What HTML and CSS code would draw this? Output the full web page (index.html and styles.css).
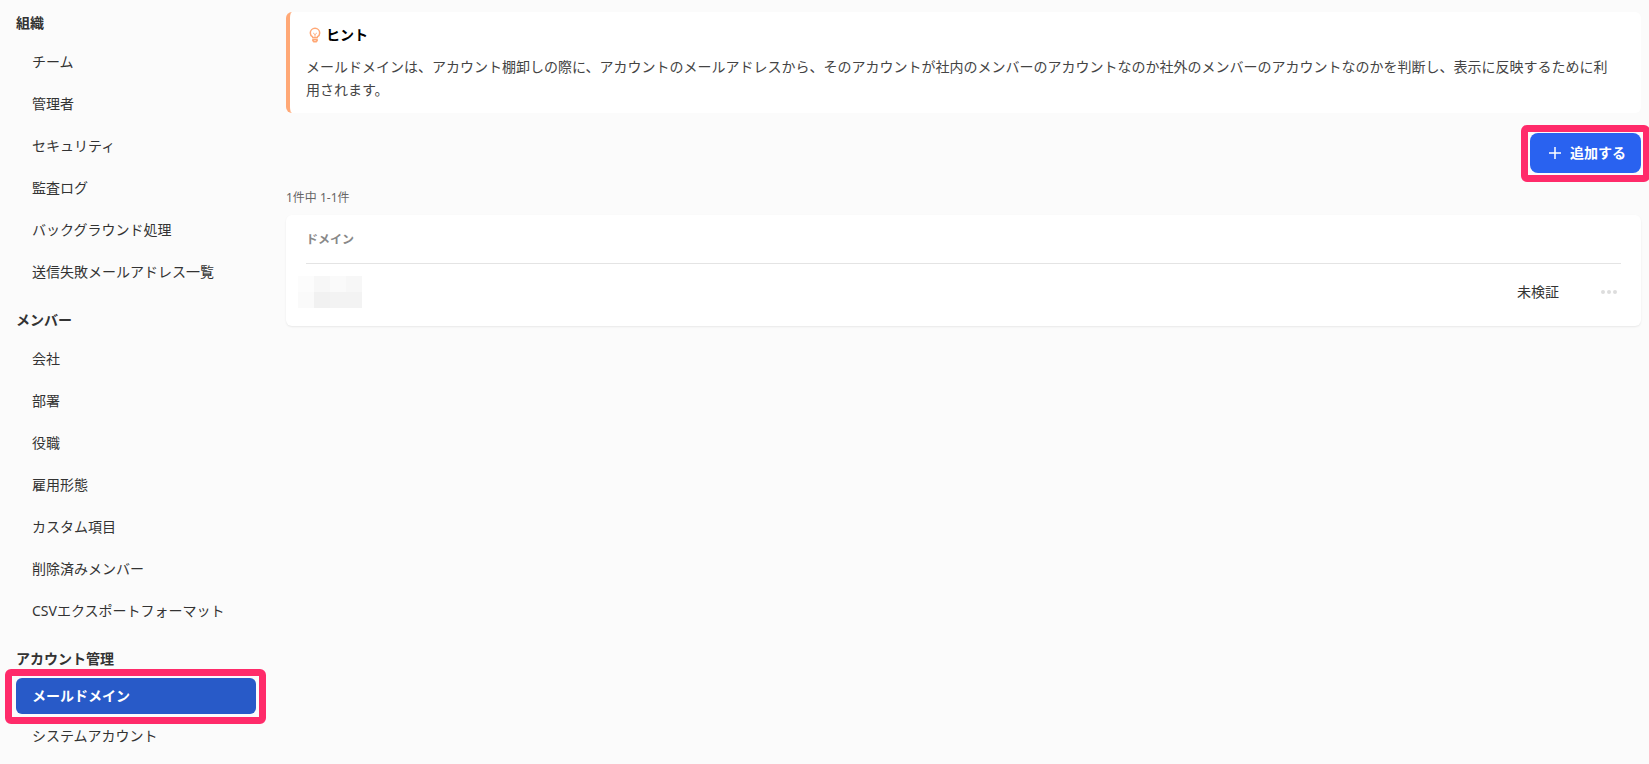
FILE: index.html
```html
<!DOCTYPE html>
<html lang="ja">
<head>
<meta charset="utf-8">
<meta name="viewport" content="width=device-width, initial-scale=1">
<title>メールドメイン</title>
<link rel="stylesheet" href="styles.css">
</head>
<body>
<div class="layout">
  <nav class="sidebar" aria-label="設定">
    <section class="group">
      <h2 class="group-title">組織</h2>
      <ul class="menu">
        <li><a class="menu-link" href="#team">チーム</a></li>
        <li><a class="menu-link" href="#admins">管理者</a></li>
        <li><a class="menu-link" href="#security">セキュリティ</a></li>
        <li><a class="menu-link" href="#audit">監査ログ</a></li>
        <li><a class="menu-link" href="#jobs">バックグラウンド処理</a></li>
        <li><a class="menu-link" href="#bounces">送信失敗メールアドレス一覧</a></li>
      </ul>
    </section>
    <section class="group">
      <h2 class="group-title">メンバー</h2>
      <ul class="menu">
        <li><a class="menu-link" href="#companies">会社</a></li>
        <li><a class="menu-link" href="#departments">部署</a></li>
        <li><a class="menu-link" href="#positions">役職</a></li>
        <li><a class="menu-link" href="#employment">雇用形態</a></li>
        <li><a class="menu-link" href="#fields">カスタム項目</a></li>
        <li><a class="menu-link" href="#deleted">削除済みメンバー</a></li>
        <li><a class="menu-link" href="#csv">CSVエクスポートフォーマット</a></li>
      </ul>
    </section>
    <section class="group group-compact">
      <h2 class="group-title">アカウント管理</h2>
      <ul class="menu">
        <li><a class="menu-link is-active" href="#domains" aria-current="page">メールドメイン</a></li>
        <li><a class="menu-link" href="#system">システムアカウント</a></li>
      </ul>
    </section>
  </nav>

  <main class="content">
    <aside class="hint">
      <h3 class="hint-title">
        <svg class="hint-icon" viewBox="0 0 16 16" aria-hidden="true"><g fill="none" stroke="currentColor" stroke-width="1.5" stroke-linejoin="round" stroke-linecap="round"><path d="M5.700 10.700V9.900C4.200 9.100 3.300 7.700 3.300 6a4.700 4.700 0 0 1 9.400 0c0 1.700-.9 3.100-2.400 3.900v.8z"/><path d="M6.400 6.200 8 7.600l1.600-1.400M8 7.600v2.600" stroke-width=".9"/><path d="M5.800 12.700h4.400v.8l-1 1.300H6.800l-1-1.300z"/></g></svg>
        ヒント
      </h3>
      <p class="hint-text">メールドメインは、アカウント棚卸しの際に、アカウントのメールアドレスから、そのアカウントが社内のメンバーのアカウントなのか社外のメンバーのアカウントなのかを判断し、表示に反映するために利用されます。</p>
    </aside>

    <div class="toolbar">
      <button class="add-button" type="button">
        <svg class="plus-icon" viewBox="0 0 14 14" aria-hidden="true"><path d="M7 1v12M1 7h12" fill="none" stroke="currentColor" stroke-width="1.5"/></svg>
        追加する
      </button>
    </div>

    <p class="count">1件中 1-1件</p>

    <div class="card">
      <table class="domains">
        <thead>
          <tr><th scope="col" colspan="3">ドメイン</th></tr>
        </thead>
        <tbody>
          <tr>
            <td><div class="mosaic"><i class="a"></i><i class="c"></i><i class="b"></i><i class="c"></i><i class="b"></i><i class="e"></i><i class="d"></i><i class="d"></i></div></td>
            <td class="status">未検証</td>
            <td class="actions">
              <button class="more" type="button" aria-label="操作"><svg viewBox="0 0 16 4" aria-hidden="true"><g fill="currentColor"><circle cx="2" cy="2" r="2"/><circle cx="8" cy="2" r="2"/><circle cx="14" cy="2" r="2"/></g></svg></button>
            </td>
          </tr>
        </tbody>
      </table>
    </div>
  </main>
</div>
</body>
</html>
```
FILE: styles.css
```css
* {
  box-sizing: border-box;
}

body {
  margin: 0;
  background: #fbfbfb;
  color: #333;
  font: 14px/20px "Noto Sans", "Noto Sans CJK JP", sans-serif;
  overflow-x: hidden;
}

h2, h3, p, ul {
  margin: 0;
  padding: 0;
}

button {
  font: inherit;
  border: 0;
  cursor: pointer;
}

.layout {
  display: flex;
}

/* Sidebar */
.sidebar {
  flex: none;
  width: 286px;
  padding: 13px 30px 8px 16px;
  display: flex;
  flex-direction: column;
  gap: 20px;
}

.group-title {
  font-size: 14px;
  line-height: 20px;
  font-weight: 700;
}

.menu {
  list-style: none;
  display: grid;
  gap: 6px;
  padding-top: 11px;
}

.group-compact .menu {
  gap: 4px;
  padding-top: 9px;
}

.menu-link {
  display: block;
  padding: 8px 16px;
  border-radius: 6px;
  color: inherit;
  text-decoration: none;
}

.menu-link.is-active {
  position: relative;
  background: #285ac8;
  color: #fff;
  font-weight: 700;
}

/* Highlight frames */
.is-active::after,
.add-button::after {
  content: "";
  position: absolute;
  inset: -9px -10px -10px -11px;
  border: 7px solid #ff2b6a;
  border-radius: 6px;
  pointer-events: none;
}

/* Main column */
.content {
  flex: 1;
  min-width: 0;
  padding: 12px 8px 0 0;
}

.hint {
  padding: 13px 20px 12px 16px;
  background: #fff;
  border-left: 4px solid #ffa876;
  border-radius: 6px;
}

.hint-title {
  display: flex;
  align-items: center;
  gap: 3px;
  padding-left: 1px;
  color: #000;
  font-size: 14px;
  line-height: 20px;
}

.hint-icon {
  width: 16px;
  height: 16px;
  color: #ffa876;
}

.hint-text {
  margin-top: 10px;
  color: #444;
  line-height: 23px;
}

.toolbar {
  display: flex;
  justify-content: flex-end;
  margin-top: 20px;
}

.add-button {
  position: relative;
  display: flex;
  align-items: center;
  gap: 8px;
  height: 40px;
  padding: 0 15px 0 18px;
  border-radius: 8px;
  background: #2962f0;
  color: #fff;
  font-weight: 700;
}

.add-button::after {
  inset: -8px -9px -9px -9px;
}

.plus-icon {
  width: 14px;
  height: 14px;
}

.count {
  margin-top: 16px;
  color: #666;
  font-size: 12px;
  line-height: 18px;
}

.card {
  margin-top: 8px;
  padding: 0 20px;
  background: #fff;
  border-radius: 6px;
  box-shadow: 0 1px 2px rgba(0, 0, 0, .08);
}

.domains {
  width: 100%;
  border-collapse: collapse;
}

.domains th {
  height: 48px;
  padding: 2px 0 0;
  border-bottom: 1px solid #e4e4e4;
  color: #888;
  font-size: 12px;
  text-align: left;
}

.domains td {
  height: 63px;
  padding: 0 0 5px;
}

.domains .status {
  width: 84px;
}

.domains .actions {
  width: 20px;
}

.more {
  display: block;
  width: 16px;
  padding: 8px 0;
  background: none;
  color: #ddd;
}

.more svg {
  display: block;
  width: 16px;
  height: 4px;
}

.mosaic {
  display: grid;
  grid-template-columns: repeat(4, 16px);
  grid-auto-rows: 16px;
  margin-left: -8px;
}

.a { background: #fcfcfc; }
.b { background: #fafafa; }
.c { background: #f7f7f7; }
.d { background: #f3f3f3; }
.e { background: #f1f1f1; }
```
